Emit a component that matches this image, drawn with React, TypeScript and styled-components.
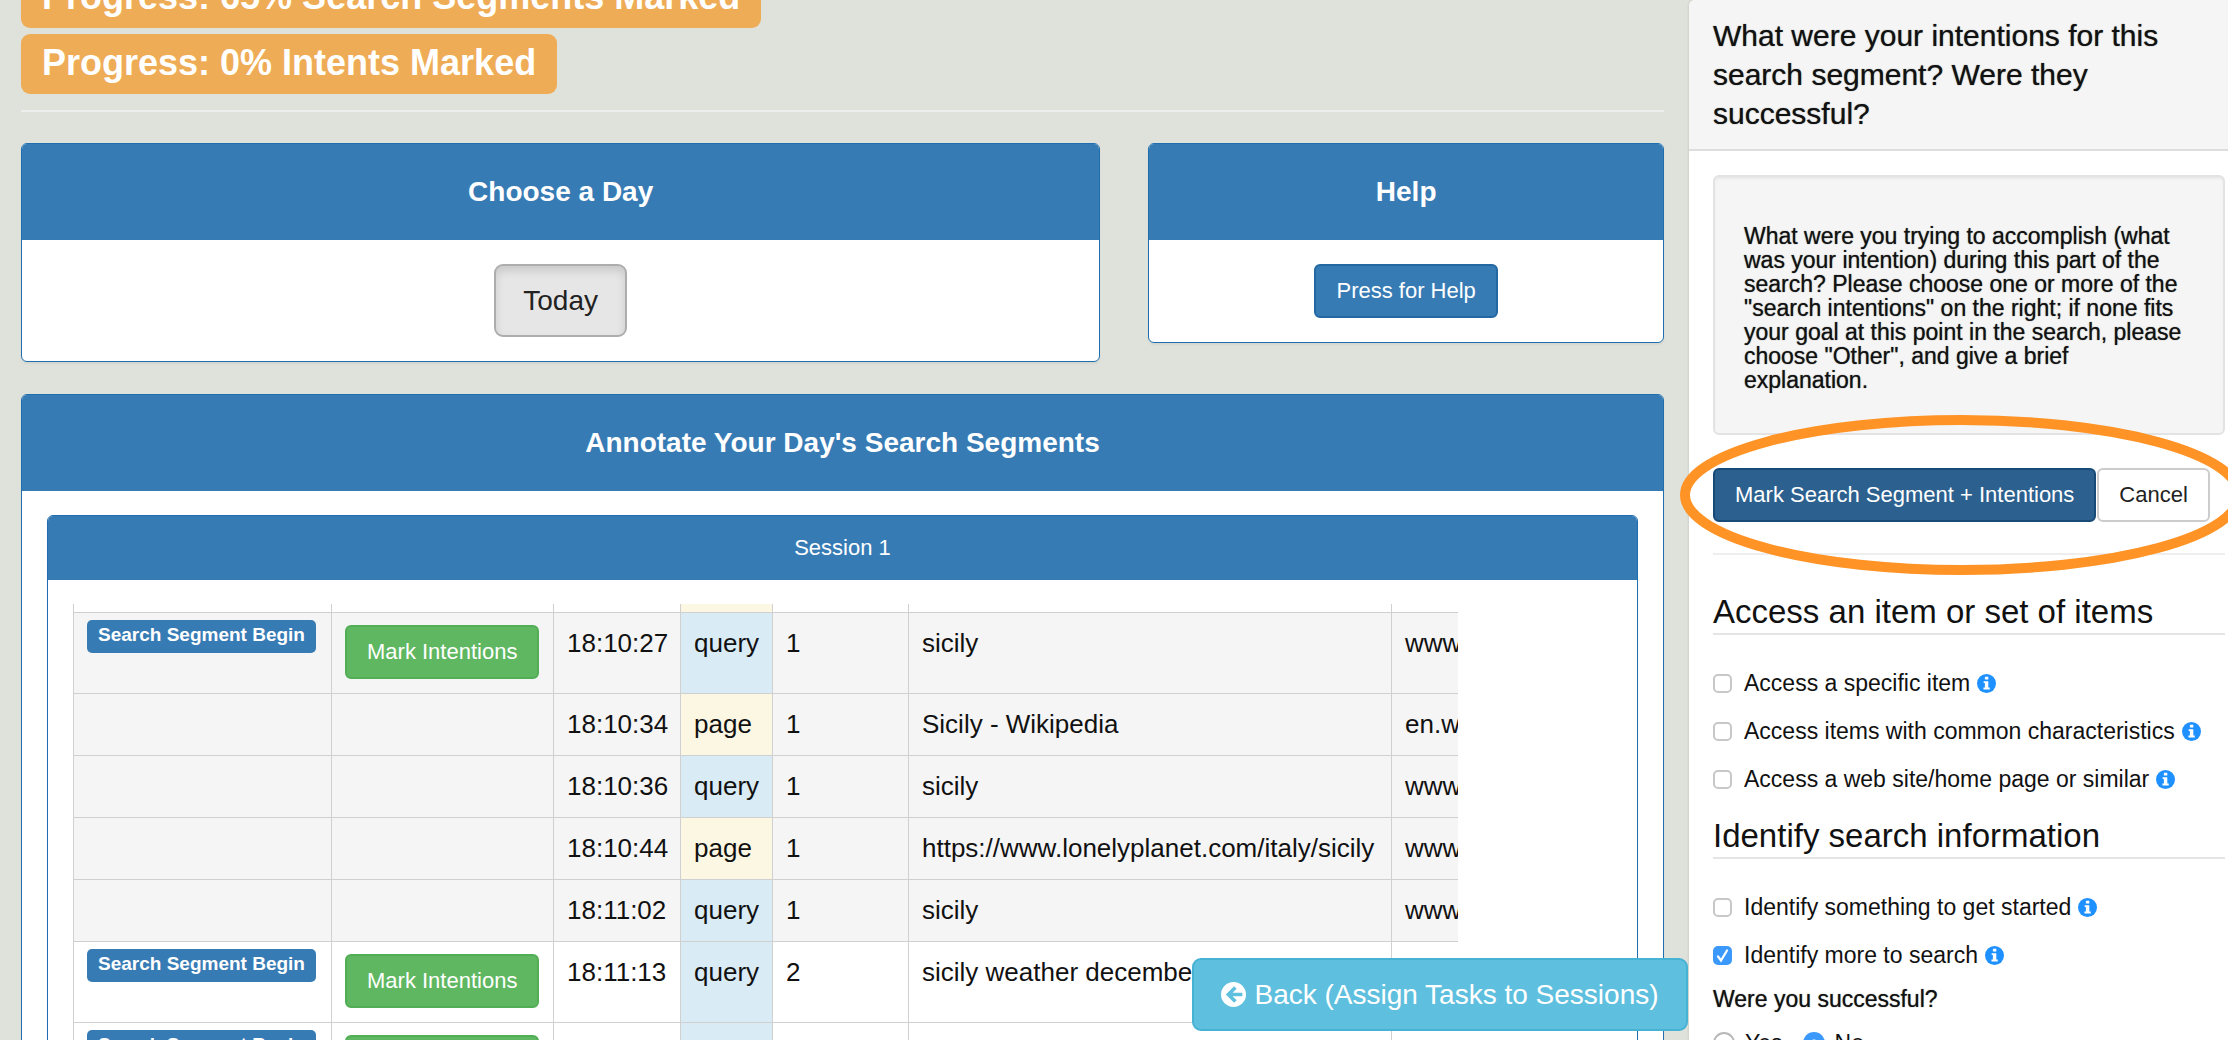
import React from "react";
import styled, { createGlobalStyle, css } from "styled-components";

const GlobalStyle = createGlobalStyle`
  *, *::before, *::after { box-sizing: border-box; }
  body {
    margin: 0;
    background: #dfe2db;
    color: #111;
    font-family: "Liberation Sans", Arial, sans-serif;
    font-size: 22px;
    line-height: 32px;
  }
  button, input { font: inherit; margin: 0; }
`;

const softWeight = css`
  font-weight: 500;
  text-shadow: 0 0 1px rgba(17, 17, 17, 0.7);
`;

const Page = styled.div`
  position: relative;
  display: flex;
  height: 100vh;
  overflow: hidden;
`;

const Main = styled.main`
  position: relative;
  flex: 1;
  min-width: 0;
  padding: 0 25px 0 21px;
`;

const ProgressList = styled.div`
  display: flex;
  flex-direction: column;
  align-items: flex-start;
  gap: 6px;
  margin-top: -32px;
`;

const ProgressLabel = styled.span`
  padding: 8px 21px 10px;
  border-radius: 9px;
  background: #efac56;
  color: #fff;
  font-size: 36px;
  font-weight: 700;
  line-height: 42px;
`;

const Rule = styled.hr<{ $top: number; $bottom: number }>`
  height: 2px;
  margin: ${(p) => p.$top}px 0 ${(p) => p.$bottom}px;
  border: 0;
  background: #eee;
`;

const PanelRow = styled.div`
  display: grid;
  grid-template-columns: repeat(12, 1fr);
  column-gap: 48px;
  align-items: start;
  margin-bottom: 32px;
`;

const Panel = styled.section<{ $span?: number }>`
  ${(p) => p.$span && `grid-column: span ${p.$span};`}
  border: 1px solid #1f6fb0;
  border-radius: 6px;
  background: #fff;
  box-shadow: 0 2px 2px rgba(0, 0, 0, 0.05);
`;

const PanelTitle = styled.h3`
  margin: 0;
  padding: 28px 24px;
  border-radius: 5px 5px 0 0;
  background: #377bb5;
  color: #fff;
  font-size: 28px;
  font-weight: 700;
  line-height: 40px;
  text-align: center;
`;

const SessionTitle = styled.h4`
  margin: 0;
  padding: 16px 24px;
  border-radius: 5px 5px 0 0;
  background: #377bb5;
  color: #fff;
  font-size: 22px;
  font-weight: 400;
  line-height: 32px;
  text-align: center;
`;

const PanelBody = styled.div<{ $centered?: boolean }>`
  padding: 24px 25px;
  ${(p) => p.$centered && "display: flex; justify-content: center;"}
`;

type Tone = "primary" | "pressed" | "success" | "plain";

const tones: Record<Tone, string> = {
  primary: "background: #377bb5; border-color: #2368a2; color: #fff;",
  pressed: "background: #2c618f; border-color: #174a76; color: #fff;",
  success: "background: #60b762; border-color: #51ae54; color: #fff;",
  plain: "background: #fff; border-color: #ccc; color: #222;",
};

const Button = styled.button<{ $tone: Tone }>`
  display: block;
  padding: 9px 20px;
  border: 2px solid;
  border-radius: 6px;
  line-height: 32px;
  white-space: nowrap;
  ${(p) => tones[p.$tone]}
`;

const DayButton = styled.button`
  padding: 14px 27px;
  border: 2px solid #adadad;
  border-radius: 9px;
  background: #e6e6e6;
  color: #222;
  font-size: 28px;
  line-height: 41px;
  box-shadow: inset 0 5px 8px rgba(0, 0, 0, 0.125);
`;

const TableViewport = styled.div`
  width: 90%;
  overflow: hidden;
`;

const Table = styled.table`
  width: 1720px;
  table-layout: fixed;
  border-collapse: collapse;
  font-size: 26px;
  line-height: 36px;
`;

const Row = styled.tr<{ $striped?: boolean }>`
  background: ${(p) => (p.$striped ? "#f5f5f5" : "#fff")};
`;

const Cell = styled.td<{ $kind?: string; $thin?: boolean }>`
  height: ${(p) => (p.$thin ? 8 : 62)}px;
  padding: ${(p) => (p.$thin ? "0" : "12px 13px")};
  border: 1px solid #d0d0d0;
  ${(p) => p.$thin && "border-top: 0;"}
  vertical-align: top;
  white-space: nowrap;
  ${(p) => p.$kind === "query" && "background: #d9ebf5;"}
  ${(p) => p.$kind === "page" && "background: #fcf7e2;"}
`;

const SegmentLabel = styled.span`
  display: block;
  width: max-content;
  margin-top: -5px;
  padding: 4px 11px 7px;
  border-radius: 5px;
  background: #377bb5;
  color: #fff;
  font-size: 19px;
  font-weight: 700;
  line-height: 22px;
`;

const RowAction = styled(Button)`
  margin-bottom: 2px;
  font-size: 22px;
`;

const BackButton = styled.button`
  position: absolute;
  right: 1px;
  bottom: 9px;
  display: flex;
  align-items: center;
  justify-content: center;
  gap: 8px;
  min-width: 496px;
  padding: 14px 25px;
  border: 2px solid #46b2d4;
  border-radius: 9px;
  background: #5fbfde;
  color: #fff;
  font-size: 28px;
  line-height: 41px;
  white-space: nowrap;
`;

const Sidebar = styled.aside`
  flex: 0 0 539px;
  height: 100%;
  border-top-left-radius: 6px;
  background: #fff;
  box-shadow: 0 0 3px rgba(0, 0, 0, 0.15);
`;

const SidebarHeader = styled.header`
  padding: 16px 60px 16px 24px;
  border-bottom: 2px solid #ddd;
  border-top-left-radius: 6px;
  background: #f5f5f5;
`;

const SidebarTitle = styled.h2`
  ${softWeight}
  margin: 0;
  font-size: 30px;
  line-height: 39px;
`;

const SidebarBody = styled.div`
  padding: 24px 3px 0 24px;
`;

const Well = styled.div`
  margin-bottom: 33px;
  padding: 47px 29px 41px;
  border: 2px solid #e3e3e3;
  border-radius: 6px;
  background: #f5f5f5;
  box-shadow: inset 0 2px 2px rgba(0, 0, 0, 0.05);
`;

const WellText = styled.p`
  ${softWeight}
  margin: 0;
  font-size: 23px;
  line-height: 24px;
`;

const ButtonGroup = styled.div`
  position: relative;
  display: flex;
  gap: 1px;
`;

const Highlight = styled.svg`
  position: absolute;
  left: -33px;
  top: -53px;
  pointer-events: none;
`;

const Group = styled.fieldset`
  min-width: 0;
  margin: 0;
  padding: 0;
  border: 0;
  font-size: 23px;
`;

const Legend = styled.legend`
  width: 100%;
  margin-bottom: 32px;
  padding: 4px 0 0;
  border-bottom: 2px solid #e5e5e5;
  font-size: 33px;
  line-height: 42px;
`;

const Option = styled.label`
  display: flex;
  align-items: center;
  margin-bottom: 16px;
  color: #111;
`;

const Checkbox = styled.input`
  appearance: none;
  flex: none;
  width: 19px;
  height: 19px;
  margin-right: 12px;
  border: 2px solid #c8c8c8;
  border-radius: 5px;
  background: #fff;

  &:checked {
    border: 0;
    background: #3b99fc
      url("data:image/svg+xml,%3Csvg xmlns='http://www.w3.org/2000/svg' viewBox='0 0 19 19' fill='none' stroke='white' stroke-width='2.200' stroke-linecap='round'%3E%3Cpath d='M5 10.500l3 4L14 4.500'/%3E%3C/svg%3E")
      center / contain;
  }
`;

const Radio = styled.input`
  appearance: none;
  flex: none;
  width: 22px;
  height: 22px;
  margin-right: 10px;
  border: 2px solid #b8b8b8;
  border-radius: 50%;
  background: #fff;

  &:checked {
    border: 0;
    background: radial-gradient(circle, #fff 3px, #3b99fc 4px);
  }
`;

const Question = styled.p`
  ${softWeight}
  margin: 0 0 16px;
  line-height: 24px;
`;

const Answers = styled.div`
  display: flex;
  gap: 20px;
`;

const InfoSvg = styled.svg`
  flex: none;
  margin-left: 7px;
`;

const InfoIcon = () => (
  <InfoSvg width="19" height="19" viewBox="0 0 20 20" aria-hidden="true">
    <circle cx="10" cy="10" r="10" fill="#1e90ff" />
    <path d="M8.300 2.800h3.600v2.900H8.300zM7 7.500h4.900v6.800h1.500v2H6.800v-2h1.500V9.500H7z" fill="#fff" />
  </InfoSvg>
);

const BackIcon = () => (
  <svg width="25" height="25" viewBox="0 0 24 24" aria-hidden="true">
    <circle cx="12" cy="12" r="12" fill="#fff" />
    <path d="M13.800 5.200L7 12l6.800 6.800M8 12h12.500" fill="none" stroke="#5fbfde" strokeWidth="3.400" />
  </svg>
);

interface LogEntry {
  time: string;
  kind: "query" | "page";
  segment: number;
  title: string;
  domain: string;
  striped?: boolean;
  begins?: boolean;
}

const entries: LogEntry[] = [
  { time: "18:10:27", kind: "query", segment: 1, title: "sicily", domain: "www.google.com", striped: true, begins: true },
  { time: "18:10:34", kind: "page", segment: 1, title: "Sicily - Wikipedia", domain: "en.wikipedia.org", striped: true },
  { time: "18:10:36", kind: "query", segment: 1, title: "sicily", domain: "www.google.com", striped: true },
  { time: "18:10:44", kind: "page", segment: 1, title: "https://www.lonelyplanet.com/italy/sicily", domain: "www.lonelyplanet.com", striped: true },
  { time: "18:11:02", kind: "query", segment: 1, title: "sicily", domain: "www.google.com", striped: true },
  { time: "18:11:13", kind: "query", segment: 2, title: "sicily weather december", domain: "", begins: true },
  { time: "", kind: "query", segment: 0, title: "", domain: "", begins: true },
];

const columns = [258, 222, 127, 92, 136, 483, 402];

const accessOptions = [
  "Access a specific item",
  "Access items with common characteristics",
  "Access a web site/home page or similar",
];

const identifyOptions = [
  { text: "Identify something to get started", checked: false },
  { text: "Identify more to search", checked: true },
];

export default function App() {
  return (
    <>
      <GlobalStyle />
      <Page>
        <Main>
          <ProgressList>
            <ProgressLabel>Progress: 65% Search Segments Marked</ProgressLabel>
            <ProgressLabel>Progress: 0% Intents Marked</ProgressLabel>
          </ProgressList>
          <Rule $top={16} $bottom={31} />
          <PanelRow>
            <Panel $span={8}>
              <PanelTitle>Choose a Day</PanelTitle>
              <PanelBody $centered>
                <DayButton type="button">Today</DayButton>
              </PanelBody>
            </Panel>
            <Panel $span={4}>
              <PanelTitle>Help</PanelTitle>
              <PanelBody $centered>
                <Button type="button" $tone="primary">Press for Help</Button>
              </PanelBody>
            </Panel>
          </PanelRow>
          <Panel>
            <PanelTitle>Annotate Your Day's Search Segments</PanelTitle>
            <PanelBody>
              <Panel>
                <SessionTitle>Session 1</SessionTitle>
                <PanelBody>
                  <TableViewport>
                    <Table>
                      <colgroup>
                        {columns.map((w, i) => (
                          <col key={i} style={{ width: w }} />
                        ))}
                      </colgroup>
                      <tbody>
                        <Row>
                          {columns.map((w, i) => (
                            <Cell key={i} $thin $kind={i === 3 ? "page" : undefined} />
                          ))}
                        </Row>
                        {entries.map((e, i) => (
                          <Row key={i} $striped={e.striped}>
                            <Cell>{e.begins && <SegmentLabel>Search Segment Begin</SegmentLabel>}</Cell>
                            <Cell>
                              {e.begins && (
                                <RowAction type="button" $tone="success">Mark Intentions</RowAction>
                              )}
                            </Cell>
                            <Cell>{e.time}</Cell>
                            <Cell $kind={e.kind}>{e.time && e.kind}</Cell>
                            <Cell>{e.segment || ""}</Cell>
                            <Cell>{e.title}</Cell>
                            <Cell>{e.domain}</Cell>
                          </Row>
                        ))}
                      </tbody>
                    </Table>
                  </TableViewport>
                </PanelBody>
              </Panel>
            </PanelBody>
          </Panel>
          <BackButton type="button">
            <BackIcon />
            Back (Assign Tasks to Sessions)
          </BackButton>
        </Main>
        <Sidebar>
          <SidebarHeader>
            <SidebarTitle>
              What were your intentions for this search segment? Were they successful?
            </SidebarTitle>
          </SidebarHeader>
          <SidebarBody>
            <Well>
              <WellText>
                What were you trying to accomplish (what was your intention) during this part of the
                search? Please choose one or more of the "search intentions" on the right; if none
                fits your goal at this point in the search, please choose "Other", and give a brief
                explanation.
              </WellText>
            </Well>
            <ButtonGroup>
              <Button type="button" $tone="pressed">Mark Search Segment + Intentions</Button>
              <Button type="button" $tone="plain">Cancel</Button>
              <Highlight width="565" height="161" viewBox="0 0 565 161" aria-hidden="true">
                <ellipse cx="282" cy="80" rx="277" ry="75" fill="none" stroke="#ff9326" strokeWidth="10" />
              </Highlight>
            </ButtonGroup>
            <Rule $top={31} $bottom={32} />
            <Group>
              <Legend>Access an item or set of items</Legend>
              {accessOptions.map((text) => (
                <Option key={text}>
                  <Checkbox type="checkbox" />
                  {text}
                  <InfoIcon />
                </Option>
              ))}
            </Group>
            <Group>
              <Legend>Identify search information</Legend>
              {identifyOptions.map((o) => (
                <Option key={o.text}>
                  <Checkbox type="checkbox" defaultChecked={o.checked} />
                  {o.text}
                  <InfoIcon />
                </Option>
              ))}
              <Question>Were you successful?</Question>
              <Answers>
                <Option>
                  <Radio type="radio" name="successful" value="yes" />
                  Yes
                </Option>
                <Option>
                  <Radio type="radio" name="successful" value="no" defaultChecked />
                  No
                </Option>
              </Answers>
            </Group>
          </SidebarBody>
        </Sidebar>
      </Page>
    </>
  );
}
